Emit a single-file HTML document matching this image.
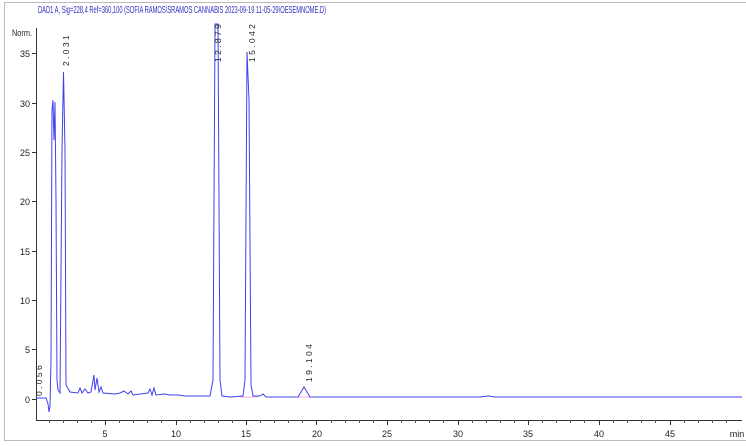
<!DOCTYPE html>
<html><head><meta charset="utf-8"><style>
html,body{margin:0;padding:0;background:#fff;width:746px;height:446px;overflow:hidden}
svg{display:block}
text{font-family:"Liberation Sans",sans-serif;}
</style></head><body>
<svg width="746" height="446" viewBox="0 0 746 446" xmlns="http://www.w3.org/2000/svg">
<rect x="4.5" y="2.5" width="745" height="438" fill="none" stroke="#bbb"/>
<text x="38" y="13" font-size="10" fill="#3030c0" textLength="288" lengthAdjust="spacingAndGlyphs">DAD1 A, Sig=228,4 Ref=360,100 (SOFIA RAMOS\SRAMOS CANNABIS 2023-09-19 11-05-29\OESEMNOME.D)</text>
<g stroke="#333" stroke-width="1" fill="none">
<line x1="36.5" y1="28" x2="36.5" y2="420.5"/>
<line x1="36" y1="420.5" x2="742" y2="420.5"/>
</g>
<g stroke="#333" stroke-width="1">
<line x1="32" y1="53.5" x2="36" y2="53.5"/><line x1="32" y1="103.5" x2="36" y2="103.5"/>
<line x1="32" y1="152.5" x2="36" y2="152.5"/><line x1="32" y1="201.5" x2="36" y2="201.5"/>
<line x1="32" y1="251.5" x2="36" y2="251.5"/><line x1="32" y1="300.5" x2="36" y2="300.5"/>
<line x1="32" y1="349.5" x2="36" y2="349.5"/><line x1="32" y1="399.5" x2="36" y2="399.5"/>
<line x1="105.5" y1="420" x2="105.5" y2="425"/><line x1="176.5" y1="420" x2="176.5" y2="425"/>
<line x1="246.5" y1="420" x2="246.5" y2="425"/><line x1="316.5" y1="420" x2="316.5" y2="425"/>
<line x1="387.5" y1="420" x2="387.5" y2="425"/><line x1="458.5" y1="420" x2="458.5" y2="425"/>
<line x1="528.5" y1="420" x2="528.5" y2="425"/><line x1="599.5" y1="420" x2="599.5" y2="425"/>
<line x1="670.5" y1="420" x2="670.5" y2="425"/>
</g>
<g stroke="#555" stroke-width="1">
<path d="M49.5 420v3M63.5 420v3M77.5 420v3M91.5 420v3M119.5 420v3M133.5 420v3M147.5 420v3M161.5 420v3M190.5 420v3M204.5 420v3M218.5 420v3M232.5 420v3M260.5 420v3M274.5 420v3M288.5 420v3M302.5 420v3M331.5 420v3M345.5 420v3M359.5 420v3M373.5 420v3M401.5 420v3M415.5 420v3M429.5 420v3M443.5 420v3M472.5 420v3M486.5 420v3M500.5 420v3M514.5 420v3M542.5 420v3M556.5 420v3M570.5 420v3M584.5 420v3M613.5 420v3M627.5 420v3M641.5 420v3M655.5 420v3M684.5 420v3M698.5 420v3M712.5 420v3M726.5 420v3"/>
</g>
<g font-size="9" fill="#222" text-anchor="end">
<text x="12" y="36" text-anchor="start" textLength="20" lengthAdjust="spacingAndGlyphs">Norm.</text>
<text x="30" y="57">35</text><text x="30" y="107">30</text><text x="30" y="156">25</text>
<text x="30" y="205">20</text><text x="30" y="255">15</text><text x="30" y="304">10</text>
<text x="30" y="353">5</text><text x="30" y="403">0</text>
</g>
<g font-size="9" fill="#222" text-anchor="middle">
<text x="105" y="437">5</text><text x="176" y="437">10</text><text x="246" y="437">15</text>
<text x="317" y="437">20</text><text x="387" y="437">25</text><text x="458" y="437">30</text>
<text x="528" y="437">35</text><text x="599" y="437">40</text><text x="670" y="437">45</text>
<text x="737" y="437">min</text>
</g>
<path fill="none" stroke="#e060c0" stroke-width="0.6" d="M240 397 L258 397 M296 397 L312 397"/>
<path fill="none" stroke="#4040ee" stroke-width="1" d="M36 398 L46 398 L48 404 L49 412 L50 406 L51 360 L52 110 L53 100 L54 140 L55 102 L56 200 L57 380 L58 390 L60 393 L62 150 L63.5 72 L65 150 L66 385 L70 392 L78 393 L80 388 L82 393 L85 389 L88 393 L91 392 L94 375 L95 390 L97 378 L99 392 L101 387 L103 393 L115 394 L120 393 L124 391 L128 394 L131 391 L133 395 L148 393 L150 389 L152 395 L154 388 L156 395 L165 394 L170 395 L178 395 L185 396 L205 396 L210 396 L213 380 L215 24 L218 24 L220 380 L222 396 L230 397 L243 396 L245 380 L247 52 L249 100 L251 385 L253 396 L260 396 L263 394 L266 397 L298 397 L301 392 L304 387 L307 392 L310 397 L480 397 L488 396 L495 397 L742 397"/>
<g font-size="8.5" fill="#222">
<text transform="translate(42 396) rotate(-90)">0 . 0 5 6</text>
<text transform="translate(69 66) rotate(-90)">2 . 0 3 1</text>
<text transform="translate(221 62) rotate(-90)">1 2 . 8 7 9</text>
<text transform="translate(255 62) rotate(-90)">1 5 . 0 4 2</text>
<text transform="translate(312 382) rotate(-90)">1 9 . 1 0 4</text>
</g>
</svg>
</body></html>
